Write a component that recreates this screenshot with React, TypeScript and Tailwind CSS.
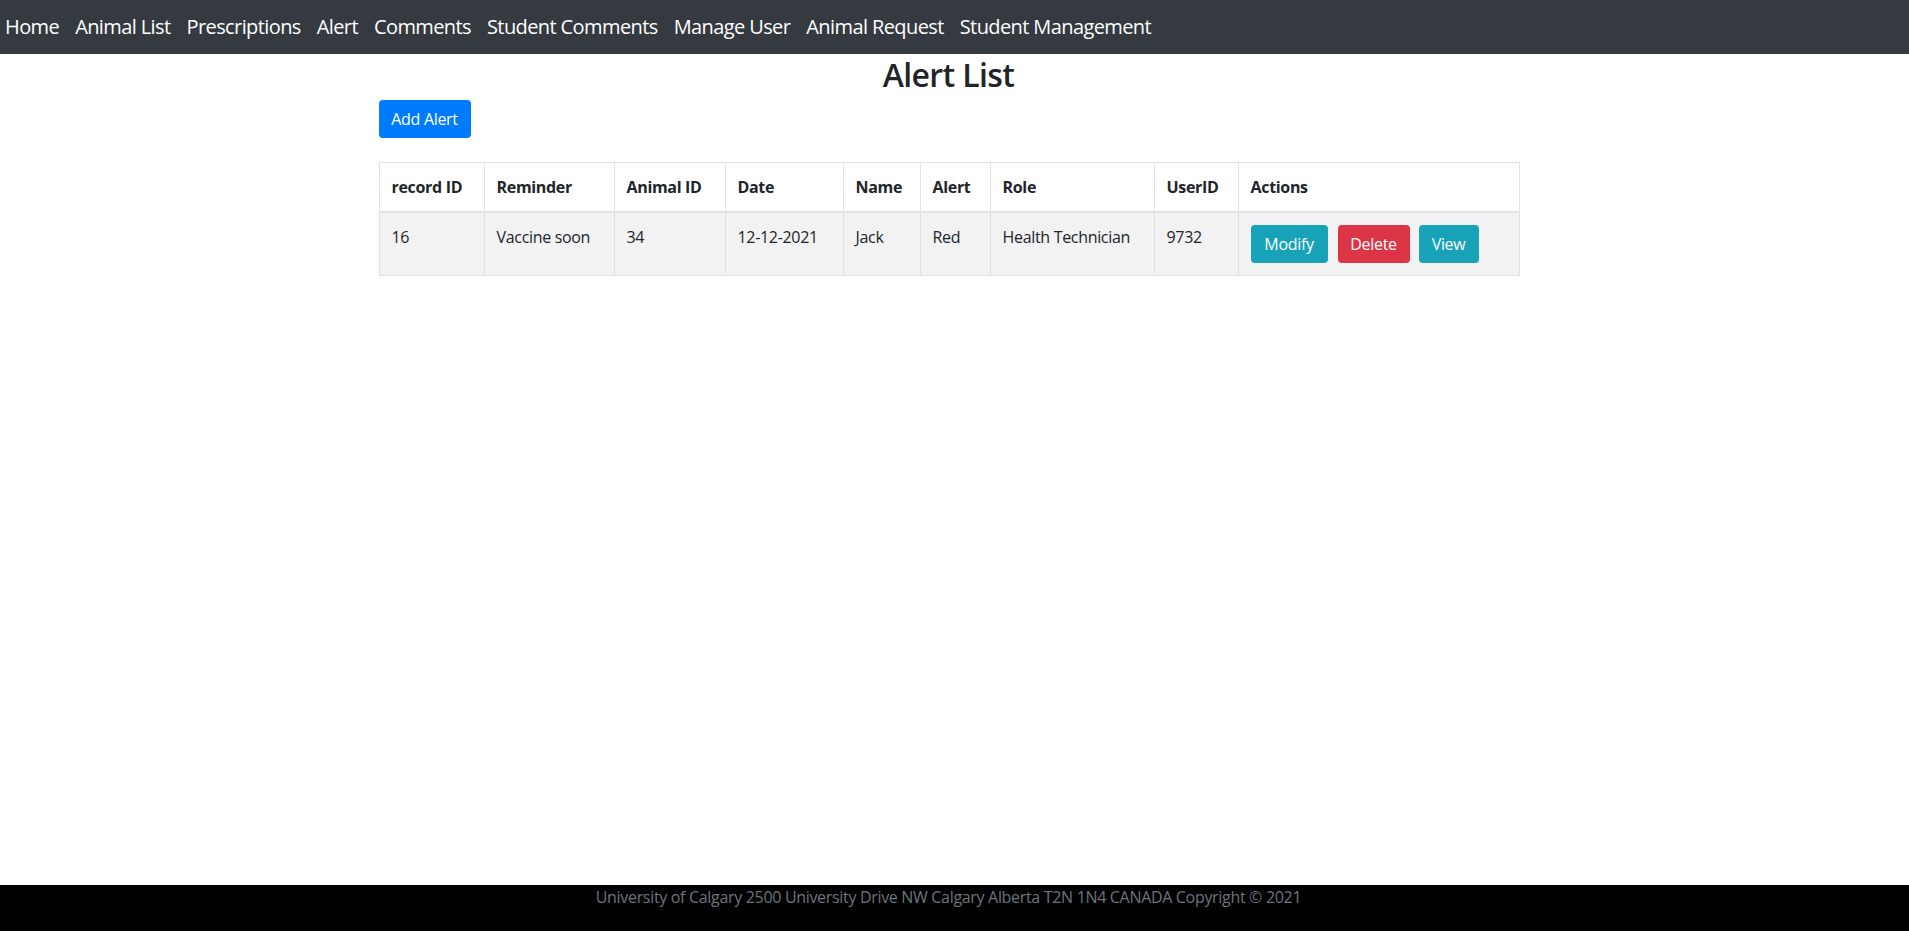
import React from "react";

const navItems = [
  "Home",
  "Animal List",
  "Prescriptions",
  "Alert",
  "Comments",
  "Student Comments",
  "Manage User",
  "Animal Request",
  "Student Management",
];

const cols = [
  { label: "record ID", w: "w-[105px]" },
  { label: "Reminder", w: "w-[130px]" },
  { label: "Animal ID", w: "w-[111px]" },
  { label: "Date", w: "w-[118px]" },
  { label: "Name", w: "w-[77px]" },
  { label: "Alert", w: "w-[70px]" },
  { label: "Role", w: "w-[164px]" },
  { label: "UserID", w: "w-[84px]" },
  { label: "Actions", w: "w-[281px]" },
];

const row = ["16", "Vaccine soon", "34", "12-12-2021", "Jack", "Red", "Health Technician", "9732"];

export default function App() {
  return (
    <div
      className="min-h-screen flex flex-col bg-white text-[#212529]"
      style={{ fontFamily: '"Open Sans", "Noto Sans", sans-serif' }}
    >
      <nav className="bg-[#343a40] h-[54px] flex items-center pl-[5px]">
        <ul className="flex items-center gap-4">
          {navItems.map((t) => (
            <li key={t} className="text-[20px] leading-[30px] text-white tracking-[-0.03em] whitespace-nowrap">
              {t}
            </li>
          ))}
        </ul>
      </nav>

      <main className="flex-1 pr-[12px]">
        <div className="w-[1140px] mx-auto">
          <h2 className="mt-[2px] text-center text-[32px] leading-[38px] font-semibold tracking-[-0.02em]">Alert List</h2>
          <button className="mt-[6px] w-[92px] h-[38px] rounded-[4px] bg-[#007bff] text-white text-[16px] tracking-[-0.02em]">
            Add Alert
          </button>
          <table className="mt-[24px] w-[1140px] table-fixed border-collapse text-[16px] tracking-[-0.02em]">
            <thead>
              <tr>
                {cols.map((c) => (
                  <th
                    key={c.label}
                    className={`${c.w} border border-[#dee2e6] border-b-2 px-3 py-3 text-left font-bold leading-[24px] whitespace-nowrap`}
                  >
                    {c.label}
                  </th>
                ))}
              </tr>
            </thead>
            <tbody>
              <tr className="bg-[#f2f2f2]">
                {row.map((v, i) => (
                  <td key={i} className="border border-[#dee2e6] px-3 py-3 align-top leading-[24px] whitespace-nowrap">
                    {v}
                  </td>
                ))}
                <td className="border border-[#dee2e6] px-3 py-3 align-top">
                  <div className="flex items-center">
                    <button className="w-[77px] h-[38px] rounded-[4px] bg-[#17a2b8] text-white">Modify</button>
                    <button className="ml-[10px] w-[72px] h-[38px] rounded-[4px] bg-[#dc3545] text-white">Delete</button>
                    <button className="ml-[9px] w-[60px] h-[38px] rounded-[4px] bg-[#17a2b8] text-white">View</button>
                  </div>
                </td>
              </tr>
            </tbody>
          </table>
        </div>
      </main>

      <footer className="h-[46px] bg-black pr-[12px]">
        <p className="text-center text-[16px] leading-[24px] text-[#6c757d] tracking-[-0.02em]">
          University of Calgary 2500 University Drive NW Calgary Alberta T2N 1N4 CANADA Copyright © 2021
        </p>
      </footer>
    </div>
  );
}
